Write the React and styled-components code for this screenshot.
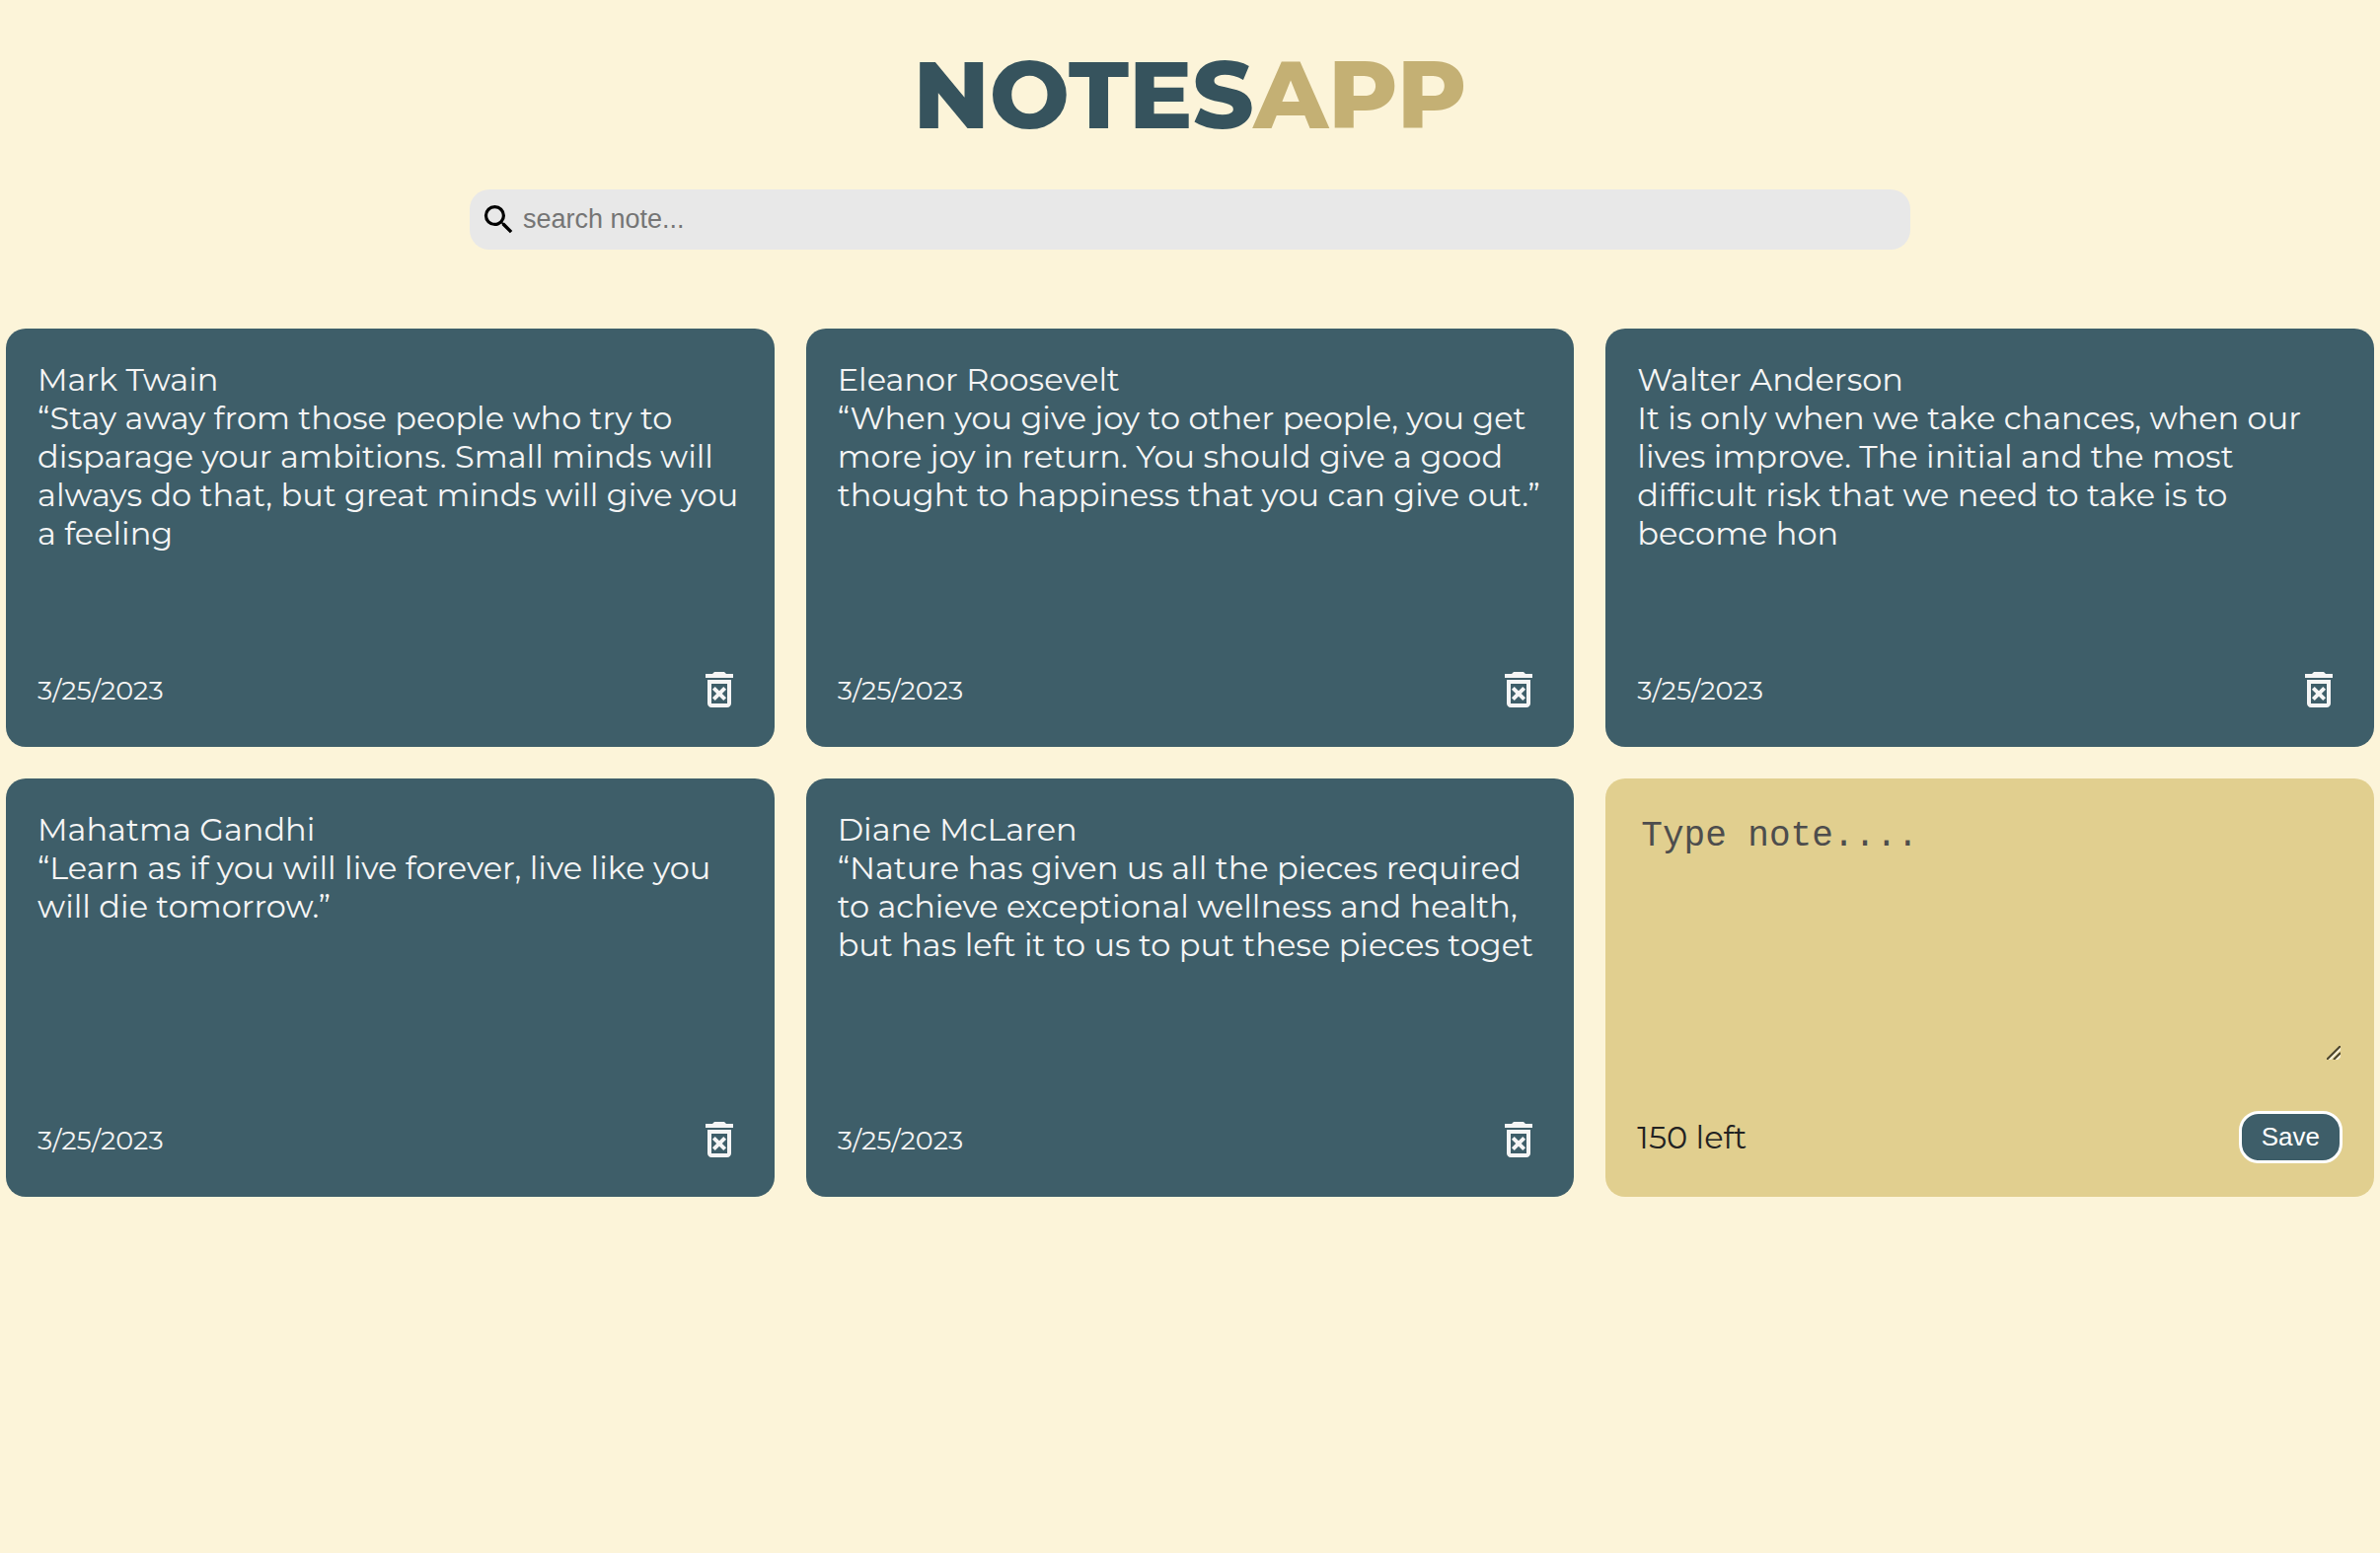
import React, { useState } from "react";
import styled, { createGlobalStyle } from "styled-components";
import { MdSearch, MdOutlineDeleteForever } from "react-icons/md";

const LIMIT = 150;

const initialNotes = [
  {
    id: 1,
    text: "Mark Twain\n“Stay away from those people who try to disparage your ambitions. Small minds will always do that, but great minds will give you a feeling",
    date: "3/25/2023",
  },
  {
    id: 2,
    text: "Eleanor Roosevelt\n“When you give joy to other people, you get more joy in return. You should give a good thought to happiness that you can give out.”",
    date: "3/25/2023",
  },
  {
    id: 3,
    text: "Walter Anderson\nIt is only when we take chances, when our lives improve. The initial and the most difficult risk that we need to take is to become hon",
    date: "3/25/2023",
  },
  {
    id: 4,
    text: "Mahatma Gandhi\n“Learn as if you will live forever, live like you will die tomorrow.”",
    date: "3/25/2023",
  },
  {
    id: 5,
    text: "Diane McLaren\n“Nature has given us all the pieces required to achieve exceptional wellness and health, but has left it to us to put these pieces toget",
    date: "3/25/2023",
  },
];

const GlobalStyle = createGlobalStyle`
  * { box-sizing: border-box; margin: 0; }
  body {
    background: #fcf4d9;
    font-family: Montserrat, Inter, sans-serif;
    font-size: 32px;
    line-height: 39px;
  }
`;

const Page = styled.main`
  padding: 36px 6px;
`;

const Title = styled.h1`
  color: #36535d;
  font-size: 96px;
  font-weight: 800;
  line-height: 120px;
  text-align: center;
`;

const TitleAccent = styled.span`
  color: #c4b074;
`;

const SearchBar = styled.label`
  display: flex;
  align-items: center;
  gap: 5px;
  max-width: 1460px;
  height: 61px;
  margin: 36px auto 80px;
  padding: 0 10px;
  border-radius: 20px;
  background: #e8e8e8;
  color: #000;
`;

const SearchInput = styled.input`
  flex: 1;
  min-width: 0;
  padding: 0;
  border: 0;
  outline: 0;
  background: transparent;
  font-family: Arial, "Liberation Sans", sans-serif;
  font-size: 27px;

  &::placeholder {
    color: #757575;
  }
`;

const NotesGrid = styled.section`
  display: grid;
  grid-template-columns: repeat(auto-fill, minmax(600px, 1fr));
  gap: 32px;
`;

const Card = styled.article`
  display: flex;
  flex-direction: column;
  justify-content: space-between;
  min-height: 424px;
  padding: 32px 32px 34px;
  border-radius: 20px;
  background: #3e5e69;
  color: #f5f5f5;
`;

const NewCard = styled(Card)`
  background: #e1cf8f;
  color: #222;
`;

const NoteText = styled.p`
  white-space: pre-line;
`;

const CardFooter = styled.footer`
  display: flex;
  align-items: center;
  justify-content: space-between;
`;

const NoteDate = styled.time`
  font-size: 27px;
`;

const DeleteButton = styled.button`
  display: flex;
  padding: 0;
  border: 0;
  background: transparent;
  color: inherit;
  cursor: pointer;
`;

const NoteField = styled.div`
  position: relative;
  display: flex;
  height: 256px;
`;

const NoteInput = styled.textarea`
  flex: 1;
  padding: 6px 4px;
  border: 0;
  outline: 0;
  resize: none;
  background: transparent;
  color: #222;
  font-family: Courier, "Courier New", "Liberation Mono", monospace;
  font-size: 36px;
  line-height: 42px;

  &::placeholder {
    color: #4d4d4d;
  }
`;

const ResizeMark = styled.svg`
  position: absolute;
  right: 2px;
  bottom: 3px;
`;

const SaveButton = styled.button`
  height: 53px;
  padding: 0 20px;
  border: 3px solid #fff;
  border-radius: 20px;
  background: #3e5e69;
  color: #fff;
  font-family: Arial, "Liberation Sans", sans-serif;
  font-size: 26px;
  cursor: pointer;
`;

function Note({ note, onDelete }) {
  return (
    <Card>
      <NoteText>{note.text}</NoteText>
      <CardFooter>
        <NoteDate>{note.date}</NoteDate>
        <DeleteButton aria-label="Delete note" onClick={() => onDelete(note.id)}>
          <MdOutlineDeleteForever size={48} />
        </DeleteButton>
      </CardFooter>
    </Card>
  );
}

function AddNote({ onSave }) {
  const [text, setText] = useState("");
  const save = () => {
    if (text.trim()) {
      onSave(text);
      setText("");
    }
  };
  return (
    <NewCard>
      <NoteField>
        <NoteInput
          aria-label="New note"
          placeholder="Type note...."
          maxLength={LIMIT}
          value={text}
          onChange={(e) => setText(e.target.value)}
        />
        <ResizeMark width="14" height="14" viewBox="0 0 14 14" fill="none" strokeWidth="2" aria-hidden="true">
          <path d="M2 15 15 2M9 15 15 9" stroke="#f7f1dc" />
          <path d="M0 14 14 0M7 14 14 7" stroke="#4b452f" />
        </ResizeMark>
      </NoteField>
      <CardFooter>
        <span>{LIMIT - text.length} left</span>
        <SaveButton onClick={save}>Save</SaveButton>
      </CardFooter>
    </NewCard>
  );
}

export default function App() {
  const [notes, setNotes] = useState(initialNotes);
  const [query, setQuery] = useState("");

  const addNote = (text) =>
    setNotes([...notes, { id: Date.now(), text, date: new Date().toLocaleDateString("en-US") }]);
  const deleteNote = (id) => setNotes(notes.filter((note) => note.id !== id));

  return (
    <>
      <GlobalStyle />
      <Page>
        <Title>
          NOTES<TitleAccent>APP</TitleAccent>
        </Title>
        <SearchBar>
          <MdSearch size={39} aria-hidden="true" />
          <SearchInput
            type="text"
            aria-label="Search notes"
            placeholder="search note..."
            value={query}
            onChange={(e) => setQuery(e.target.value)}
          />
        </SearchBar>
        <NotesGrid>
          {notes
            .filter((note) => note.text.toLowerCase().includes(query.toLowerCase()))
            .map((note) => (
              <Note key={note.id} note={note} onDelete={deleteNote} />
            ))}
          <AddNote onSave={addNote} />
        </NotesGrid>
      </Page>
    </>
  );
}
